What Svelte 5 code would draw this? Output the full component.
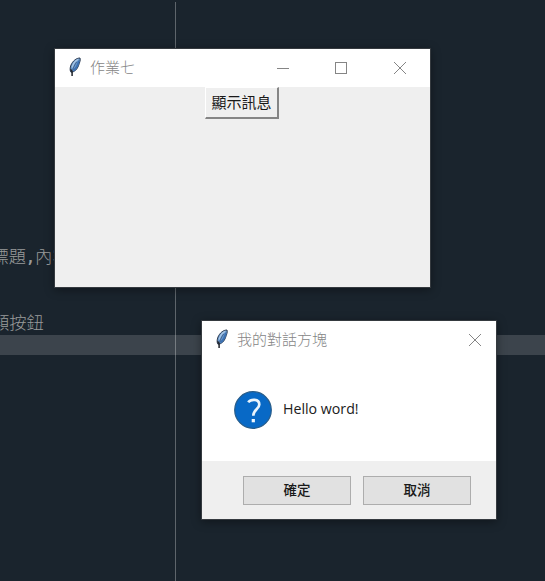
<script>
  const codeLines = [
    { kind: 'first', before: '標題', comma: ',', after: '內容' },
    { kind: 'second', before: '類按鈕', comma: '', after: '' }
  ];
</script>

{#snippet feather()}
  <svg class="feather" width="14" height="20" viewBox="0 0 14 20" aria-hidden="true">
    <path d="M12 1C8.2 1 4.6 4.2 3 8C1.9 10.8 1.8 13.4 3 15.3C6.6 15 9.4 12 10.5 8.7C11.3 6 12.9 3.3 12 1Z" fill="#6797cd" stroke="#2d3b50" stroke-width="1"/>
    <path d="M10.3 2.3C7.2 3.7 5 7 4.1 10.5" fill="none" stroke="#a9c7e5" stroke-width="1.3"/>
    <path d="M10.9 3.7C10.1 7.6 8.4 11.3 5.4 13.6" fill="none" stroke="#3c71b2" stroke-width="1.9"/>
    <path d="M8.6 5C6.4 8.4 4.6 12 4.1 15" fill="none" stroke="#2b4263" stroke-width=".6"/>
    <path d="M2.6 12.4L4.1 15V19" fill="none" stroke="#20242b" stroke-width="1.5"/>
  </svg>
{/snippet}

{#snippet cross()}
  <svg class="cross" width="12" height="12" viewBox="0 0 12 12" aria-hidden="true">
    <path d="M0 0L12 12M12 0L0 12" stroke="#858585" stroke-width="1" fill="none"/>
  </svg>
{/snippet}

<main class="desktop">
  <div class="guide"></div>
  <div class="current-line"></div>
  {#each codeLines as line}
    <div class="code {line.kind}">{line.before}{#if line.comma}<span class="comma">{line.comma}</span>{/if}{line.after}</div>
  {/each}

  <section class="window app">
    <header>
      {@render feather()}
      <span class="title">作業七</span>
      <div class="controls">
        <svg width="12" height="12" viewBox="0 0 12 12"><path d="M0 6.5H12" stroke="#858585"/></svg>
        <svg width="12" height="12" viewBox="0 0 12 12"><rect x=".5" y=".5" width="11" height="11" fill="none" stroke="#858585"/></svg>
        {@render cross()}
      </div>
    </header>
    <div class="client"><button class="show"><span>顯示訊息</span></button></div>
  </section>

  <section class="window dialog">
    <header>
      {@render feather()}
      <span class="title">我的對話方塊</span>
      <div class="controls">{@render cross()}</div>
    </header>
    <div class="message">
      <svg width="38" height="38" viewBox="0 0 38 38" aria-hidden="true">
        <circle cx="19" cy="19" r="18.3" fill="#0869c6" stroke="#285c89" stroke-width="1.2"/>
        <path d="M14.2 11.2C16.5 8.2 25.3 7.2 25.3 13.5C25.3 18.3 19.3 18.6 19.3 24.8" fill="none" stroke="#e9f4fc" stroke-width="2.7"/>
        <rect x="17.7" y="28" width="3.2" height="3.3" fill="#f1f8fd"/>
      </svg>
      <span>Hello word!</span>
    </div>
    <footer><button>確定</button><button>取消</button></footer>
  </section>
</main>

<style>
  :global(body) { margin: 0; }
  .desktop {
    position: relative;
    width: 545px;
    height: 581px;
    overflow: hidden;
    background: #1a242d;
    font-family: "Noto Sans CJK TC", "Open Sans", sans-serif;
  }
  .guide {
    position: absolute;
    left: 175px;
    top: 2px;
    bottom: 0;
    width: 1px;
    background: #5e656b;
  }
  .current-line {
    position: absolute;
    top: 335px;
    left: 0;
    right: 0;
    height: 20px;
    background: rgba(255, 255, 255, .15);
  }
  .code {
    position: absolute;
    color: #999b9b;
    font-size: 17.3px;
    font-weight: 300;
    line-height: 24px;
    white-space: nowrap;
  }
  .first { left: -8.5px; top: 244px; }
  .second { left: -8px; top: 310px; }
  .comma {
    font-family: "DejaVu Sans Mono", monospace;
    font-size: 15px;
    font-weight: 700;
  }
  .window {
    position: absolute;
    box-sizing: border-box;
    display: flex;
    flex-direction: column;
    border: 1px solid #353a3f;
    background: #fff;
    box-shadow: 0 2px 9px rgba(0, 0, 0, .38);
  }
  .app { left: 54px; top: 48px; width: 377px; height: 240px; }
  .dialog { left: 201px; top: 320px; width: 296px; height: 200px; }
  header {
    display: flex;
    align-items: center;
    box-sizing: border-box;
    height: 38px;
    padding: 0 24px 0 13px;
  }
  .dialog header { padding-right: 15px; }
  .title {
    margin: -2px 0 0 8px;
    color: #858585;
    font-size: 15px;
    font-weight: 300;
    line-height: 22px;
  }
  .feather { display: block; margin-top: -2px; }
  .controls { display: flex; gap: 46px; margin-left: auto; }
  .controls svg { display: block; }
  .controls :global(.cross) { margin-left: 1px; }
  .client {
    flex: 1;
    display: flex;
    justify-content: center;
    align-items: flex-start;
    padding-right: 1px;
    background: #efefef;
  }
  button {
    box-sizing: border-box;
    padding: 0;
    color: #191919;
    font-family: inherit;
  }
  .show {
    width: 74px;
    height: 32px;
    padding-bottom: 2px;
    border: solid;
    border-width: 1px 2px 2px 1px;
    border-color: #fff #858585 #858585 #fff;
    background: #efefef;
    font-size: 15px;
    line-height: 20px;
    white-space: nowrap;
  }
  .message {
    flex: 1;
    display: flex;
    align-items: center;
    gap: 11px;
    padding: 0 0 0 32px;
    margin-top: -1px;
    color: #202020;
    font-family: "Open Sans", sans-serif;
    font-size: 14.2px;
  }
  .message svg { display: block; margin-top: 1px; }
  .message span { margin-top: -3px; }
  footer {
    display: flex;
    justify-content: flex-end;
    gap: 12px;
    box-sizing: border-box;
    height: 58px;
    padding: 15px 25px 14px 0;
    background: #efefef;
  }
  footer button {
    width: 108px;
    height: 29px;
    padding-bottom: 3px;
    border: 1px solid #adadad;
    background: #e1e1e1;
    font-size: 13.5px;
    font-weight: 500;
    line-height: 24px;
  }
</style>
